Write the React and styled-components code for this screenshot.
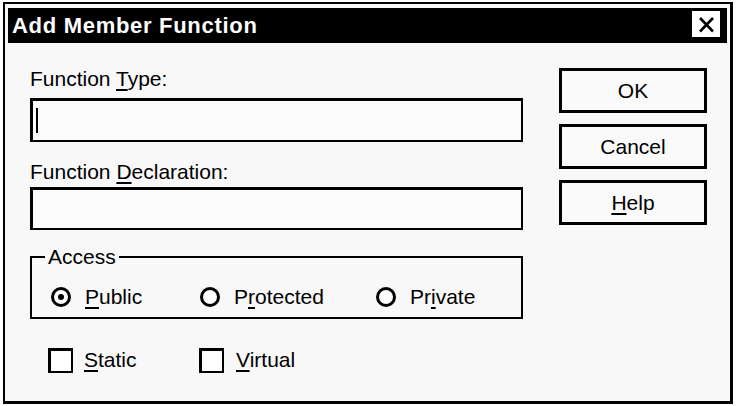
import styled, { createGlobalStyle } from 'styled-components';

const GlobalStyle = createGlobalStyle`
  html, body {
    margin: 0;
    padding: 0;
    background: #ffffff;
  }
  body {
    font-family: "Liberation Sans", Arial, sans-serif;
    color: #000;
  }
`;

export default function App() {
  return (
    <>
      <GlobalStyle />
      <Window>
        <TitleBar>
          <Title>Add Member Function</Title>
          <CloseBox aria-label="Close">
            <svg width="28" height="26" viewBox="0 0 28 26">
              <path d="M8 7 L21 20.5 M21 7 L8 20.5" stroke="#000" strokeWidth="2.6" fill="none" />
            </svg>
          </CloseBox>
        </TitleBar>

        <Body>
          <Fields>
            <Label>Function <Key>T</Key>ype:</Label>
            <TextBox $top={7} $height={44}>
              <Caret />
            </TextBox>

            <Label $top={18}>Function <Key>D</Key>eclaration:</Label>
            <TextBox $top={3} $height={43} />

            <Group>
              <Legend>Access</Legend>
              <RadioRow>
                <Option>
                  <Radio $checked />
                  <span><Key>P</Key>ublic</span>
                </Option>
                <Option>
                  <Radio />
                  <span>P<Key>r</Key>otected</span>
                </Option>
                <Option>
                  <Radio />
                  <span>Pr<Key>i</Key>vate</span>
                </Option>
              </RadioRow>
            </Group>

            <CheckRow>
              <Option $gap={11}>
                <CheckBox />
                <span><Key>S</Key>tatic</span>
              </Option>
              <Option $gap={12}>
                <CheckBox />
                <span><Key>V</Key>irtual</span>
              </Option>
            </CheckRow>
          </Fields>

          <Buttons>
            <Button>OK</Button>
            <Button>Cancel</Button>
            <Button><Key>H</Key>elp</Button>
          </Buttons>
        </Body>
      </Window>
    </>
  );
}

const Window = styled.div`
  box-sizing: border-box;
  width: 730px;
  height: 402px;
  margin: 2px 0 0 3px;
  padding: 4px 3px 0 3px;
  background: #f8f8f8;
  border-style: solid;
  border-color: #000;
  border-width: 2px 3px 3px 2px;
`;

const TitleBar = styled.div`
  height: 35px;
  background: #000;
  display: flex;
  justify-content: space-between;
  align-items: flex-start;
  padding-left: 4px;
`;

const Title = styled.div`
  font-weight: 700;
  font-size: 22px;
  letter-spacing: 0.7px;
  line-height: 35px;
  color: #fff;
`;

const CloseBox = styled.div`
  width: 28px;
  height: 26px;
  margin: 3px 7px 0 0;
  background: #fff;
  display: flex;
`;

const Body = styled.div`
  display: grid;
  grid-template-columns: 493px 148px;
  column-gap: 36px;
  padding: 24px 0 0 22px;
  font-size: 21px;
`;

const Fields = styled.div`
  display: flex;
  flex-direction: column;
`;

const Label = styled.div`
  line-height: 24px;
  margin-top: ${p => p.$top || 0}px;
`;

const Key = styled.span`
  text-decoration: underline;
  text-underline-offset: 3px;
  text-decoration-thickness: 1.5px;
`;

const TextBox = styled.div`
  box-sizing: border-box;
  height: ${p => p.$height}px;
  margin-top: ${p => p.$top}px;
  background: #fbfbfb;
  border-style: solid;
  border-color: #000;
  border-width: 3px 2px 2px 3px;
  display: flex;
  align-items: center;
  padding-left: 3px;
`;

const Caret = styled.span`
  width: 2px;
  height: 25px;
  background: #000;
`;

const Group = styled.fieldset`
  margin: 15px 0 0 0;
  padding: 0 0 8px 0;
  border: 2px solid #000;
  min-width: 0;
`;

const Legend = styled.legend`
  margin-left: 13px;
  padding: 0 3px;
  line-height: 24px;
`;

const RadioRow = styled.div`
  display: grid;
  grid-template-columns: 149px 176px auto;
  padding: 16px 0 0 19px;
  line-height: 24px;
`;

const Option = styled.label`
  display: flex;
  align-items: center;
  gap: ${p => p.$gap || 14}px;
`;

const Radio = styled.span`
  box-sizing: border-box;
  width: 20px;
  height: 20px;
  border: 3px solid #000;
  border-radius: 50%;
  background: #fff;
  display: flex;
  align-items: center;
  justify-content: center;

  &::after {
    content: "";
    width: 6px;
    height: 6px;
    border-radius: 50%;
    background: ${p => (p.$checked ? '#000' : 'transparent')};
  }
`;

const CheckRow = styled.div`
  display: grid;
  grid-template-columns: 151px auto;
  margin-top: 28px;
  padding-left: 18px;
  line-height: 26px;
`;

const CheckBox = styled.span`
  box-sizing: border-box;
  width: 25px;
  height: 25px;
  background: #fff;
  border-style: solid;
  border-color: #000;
  border-width: 3px 2px 2px 3px;
`;

const Buttons = styled.div`
  display: flex;
  flex-direction: column;
  gap: 11px;
  margin-top: 1px;
`;

const Button = styled.div`
  box-sizing: border-box;
  height: 45px;
  border: 3px solid #000;
  background: #fafafa;
  display: flex;
  align-items: center;
  justify-content: center;
  line-height: 24px;
`;
